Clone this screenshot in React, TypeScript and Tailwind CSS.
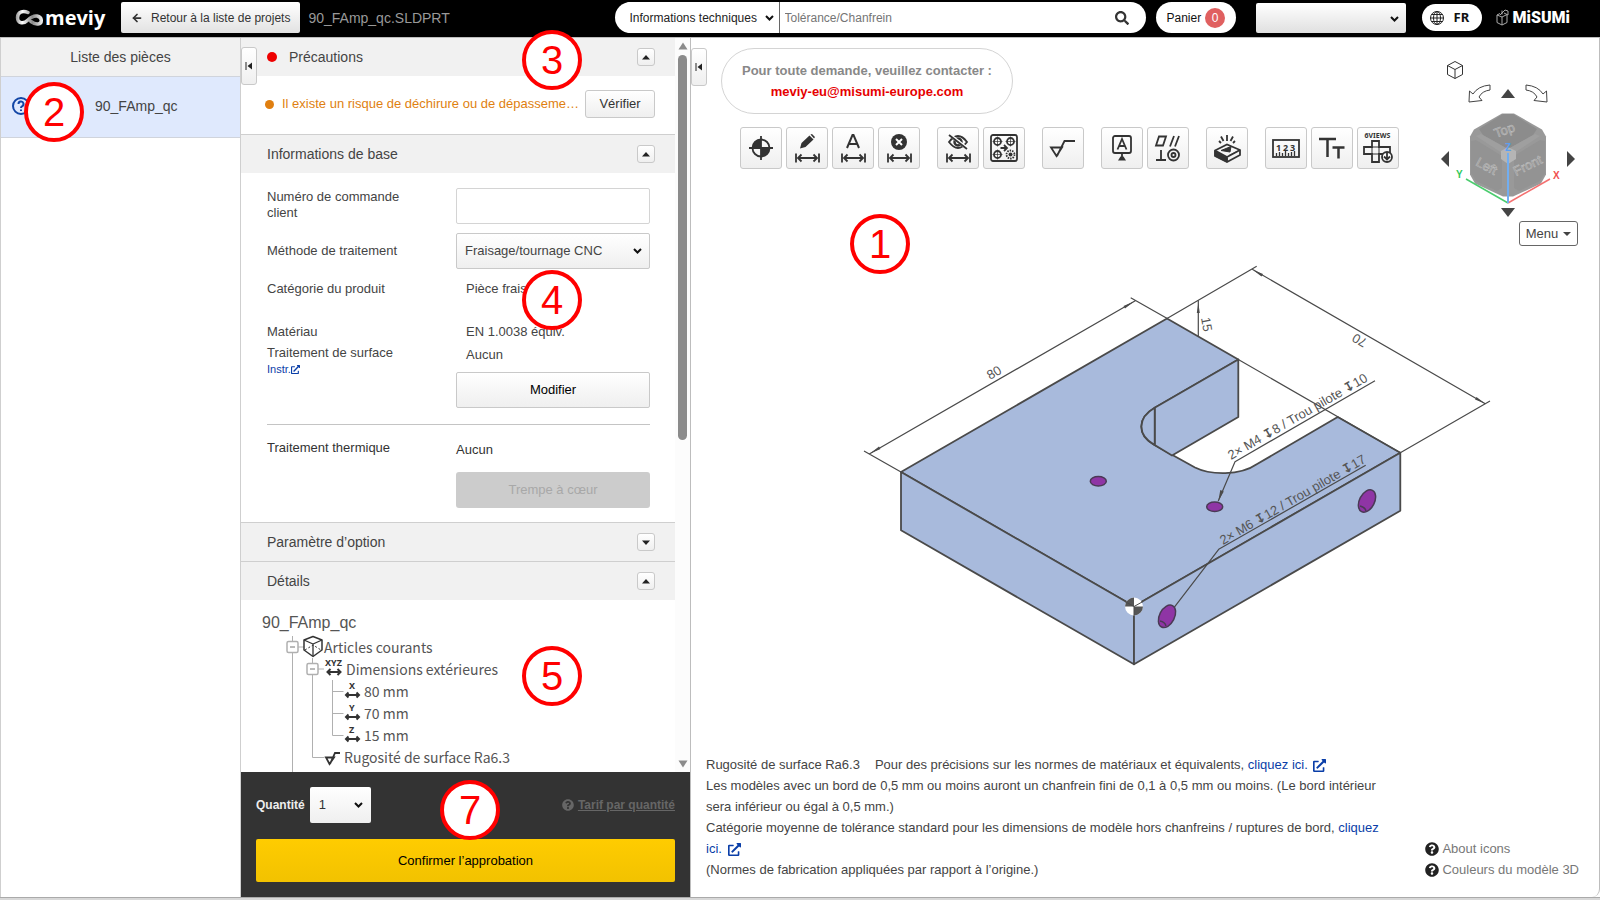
import React from "react";
import { clsx } from "clsx";
import { ArrowLeft } from "lucide-react";
import { FaSearch, FaQuestionCircle, FaExternalLinkAlt } from "react-icons/fa";

const GRADIENT = "bg-linear-to-b from-white to-[#efefef] border border-[#c9c9c9]";

function Marker({ n, className }: { n: number; className: string }) {
  return (
    <div
      className={clsx(
        "absolute z-20 flex h-[60px] w-[60px] items-center justify-center rounded-full border-4 border-[#ff0000] bg-white text-[40px] leading-none text-[#ff0000]",
        className
      )}
    >
      {n}
    </div>
  );
}

type SelectProps = { id?: string; label?: string; value: string; className: string; arrow: string };

function Select({ id, label, value, className, arrow }: SelectProps) {
  return (
    <div className="relative">
      <select id={id} aria-label={label} className={clsx("w-full appearance-none rounded-[2px]", className)}>
        <option>{value}</option>
      </select>
      <svg
        width="9"
        height="6"
        viewBox="0 0 9 6"
        fill="none"
        stroke="#111"
        strokeWidth="2"
        className={clsx("pointer-events-none absolute", arrow)}
      >
        <path d="M1 1l3.500 3.500L8 1" />
      </svg>
    </div>
  );
}

function MeviyLogo() {
  return (
    <div className="flex items-center">
      <svg width="30" height="18" viewBox="0 0 30 18" fill="none">
        <defs>
          <linearGradient id="loop" x1="0" y1="0" x2="29" y2="0" gradientUnits="userSpaceOnUse">
            <stop offset="0" stopColor="#888" />
            <stop offset="0.25" stopColor="#fff" />
            <stop offset="0.6" stopColor="#8a8a8a" />
            <stop offset="1" stopColor="#fff" />
          </linearGradient>
        </defs>
        <path
          d="M13 3.500C9 1.500 2.500 2 2.500 8.500C2.500 15 9 15 13 11C16 8 19 6.500 22 7C27.500 8 27.500 14.500 23 15C20 15.500 18 14 16 12.500"
          stroke="url(#loop)"
          strokeWidth="3.500"
          strokeLinecap="round"
        />
      </svg>
      <span className="font-['Open_Sans'] text-[20px] leading-6 font-bold text-white">meviy</span>
    </div>
  );
}

function MisumiLogo() {
  return (
    <div className="flex items-center gap-[3px]">
      <svg width="14" height="18" viewBox="0 0 14 18" fill="none" stroke="#aaa">
        <path d="M1 6l5 2v8l-5-2.500zM6 8l5-2.500v8L6 16M4 6l5-5 3 1v4M8 4l4 2M1 6l3-1.500M6 1.500v4" />
      </svg>
      <span className="font-['Roboto'] text-base leading-5 font-black text-white">MiSUMi</span>
    </div>
  );
}

function Globe() {
  return (
    <svg width="16" height="16" viewBox="0 0 16 16" fill="none" stroke="#222" strokeWidth="1">
      <circle cx="8" cy="8" r="6.500" />
      <ellipse cx="8" cy="8" rx="3.500" ry="6.500" />
      <path d="M8 1.500v13M1.500 8h13M2.500 4.500h11M2.500 11.500h11" />
    </svg>
  );
}

function Header() {
  return (
    <header className="flex h-[38px] shrink-0 items-center border-b border-[#bdbdbd] bg-black pr-[30px] pb-[2px] pl-[15px]">
      <div className="w-[106px]">
        <MeviyLogo />
      </div>
      <button className="flex h-[31px] items-center gap-2 rounded-[2px] bg-linear-to-b from-white to-[#e2e2e2] px-[10px] text-xs whitespace-nowrap text-[#333]">
        <ArrowLeft className="h-3 w-3" strokeWidth={3.5} />
        Retour à la liste de projets
      </button>
      <span className="ml-2 text-sm text-[#999]">90_FAmp_qc.SLDPRT</span>
      <div className="ml-auto flex items-center">
        <div className="flex h-[31px] w-[531px] items-center rounded-full bg-white pr-3 pl-3">
          <div className="w-[152px]">
            <Select
              label="Type de recherche"
              value="Informations techniques"
              className="h-[31px] bg-white pl-[3px] text-xs text-[#222]"
              arrow="top-[13px] right-[5px]"
            />
          </div>
          <input
            aria-label="Recherche"
            placeholder="Tolérance/Chanfrein"
            className="h-[31px] min-w-0 flex-1 border-l border-[#666] pl-[5px] text-xs placeholder:text-[#757575]"
          />
          <button aria-label="Rechercher" className="flex h-6 w-6 items-center justify-center text-[#333]">
            <FaSearch className="h-[14px] w-[14px]" />
          </button>
        </div>
        <button className="ml-[10px] flex h-[31px] w-[80px] items-center gap-1 rounded-full bg-white pl-[11px] text-xs text-[#111]">
          Panier
          <span className="flex h-5 w-5 items-center justify-center rounded-full bg-[#e06060] text-white">0</span>
        </button>
        <div className="ml-5 w-[150px]">
          <Select
            label="Compte"
            value=""
            className="h-[30px] bg-linear-to-b from-white to-[#e0e0e0] text-xs"
            arrow="top-[13px] right-[7px]"
          />
        </div>
        <button className="ml-4 flex h-[27px] w-[60px] items-center gap-2 rounded-full bg-white pl-[7px] font-['Noto_Sans'] text-[13px] font-bold text-[#111]">
          <Globe />
          <span className="pl-[1px]">FR</span>
        </button>
        <div className="ml-[14px]">
          <MisumiLogo />
        </div>
      </div>
    </header>
  );
}

function CollapseHandle({ label, className }: { label: string; className: string }) {
  return (
    <button
      aria-label={label}
      className={clsx("absolute z-10 flex h-[38px] w-4 items-center justify-center rounded-[3px]", GRADIENT, className)}
    >
      <svg width="8" height="8" viewBox="0 0 8 8" fill="#222">
        <path d="M0.500 0h1v8h-1zM7 0.500v7L2.500 4z" />
      </svg>
    </button>
  );
}

function PartList() {
  return (
    <aside className="w-[241px] shrink-0 border-x border-[#cfcfcf] bg-white">
      <h2 className="flex h-[38px] items-center justify-center bg-[#f1f1f1] text-sm text-[#444]">Liste des pièces</h2>
      <div className="flex h-[62px] items-center border-y border-[#d0d4dc] bg-[#dfe9fd] pb-[3px] pl-[11px]">
        <svg width="18" height="18" viewBox="0 0 18 18" fill="none" stroke="#1246a6" strokeWidth="2">
          <circle cx="9" cy="9" r="8" />
          <path d="M6.500 7a2.500 2.500 0 1 1 3.500 2.300q-1 .500-1 1.700M9 12.500v1.500" />
        </svg>
        <span className="pl-[65px] text-sm text-[#444]">90_FAmp_qc</span>
      </div>
    </aside>
  );
}

function Section({ title, open = true, dot = false }: { title: string; open?: boolean; dot?: boolean }) {
  return (
    <div
      className={clsx(
        "flex items-center bg-[#f1f1f1] pr-5 pl-[26px] text-sm text-[#444]",
        dot ? "h-[38px]" : "h-[39px] border-t border-[#cfcfcf]"
      )}
    >
      {dot && <span className="mr-3 h-[10px] w-[10px] rounded-full bg-[#ee0000]" />}
      <h2>{title}</h2>
      <button
        aria-label={title}
        className={clsx("ml-auto flex h-[18px] w-[18px] items-center justify-center rounded-[3px]", GRADIENT)}
      >
        <svg width="8" height="5" viewBox="0 0 8 5" fill="#222">
          <path d={open ? "M0 4.500h8L4 0z" : "M0 0.500h8L4 5z"} />
        </svg>
      </button>
    </div>
  );
}

function BasicInfo() {
  return (
    <div className="h-[349px] pt-[15px] pr-[25px] pl-[26px] text-[13px] leading-4 text-[#444]">
      <div className="flex justify-between">
        <label htmlFor="order" className="w-[150px] pt-[1px]">
          Numéro de commande client
        </label>
        <input id="order" className="h-[36px] w-[194px] rounded-[2px] border border-[#d4d4d4] px-2" />
      </div>
      <div className="mt-[9px] flex items-center justify-between">
        <label htmlFor="method">Méthode de traitement</label>
        <div className="w-[194px]">
          <Select
            id="method"
            value="Fraisage/tournage CNC"
            className={clsx("h-[36px] pl-2 text-[#444]", GRADIENT)}
            arrow="top-[15px] right-2"
          />
        </div>
      </div>
      <div className="mt-3 flex">
        <span className="w-[199px]">Catégorie du produit</span>
        <span>Pièce fraisée</span>
      </div>
      <div className="mt-[27px] flex">
        <span className="w-[199px]">Matériau</span>
        <span>EN 1.0038 équiv.</span>
      </div>
      <div className="mt-[5px] flex justify-between">
        <div>
          Traitement de surface
          <a href="#instr" className="flex items-center text-[11px] text-[#0a3ea8]">
            Instr.
            <FaExternalLinkAlt className="h-[9px] w-[9px]" />
          </a>
        </div>
        <div className="flex w-[194px] flex-col pt-[2px]">
          <span className="pl-[10px]">Aucun</span>
          <button className={clsx("mt-[9px] h-[36px] rounded-[2px] text-black", GRADIENT)}>Modifier</button>
        </div>
      </div>
      <hr className="mt-4 border-[#c4c4c4]" />
      <div className="mt-[15px] flex justify-between text-[#333]">
        <span>Traitement thermique</span>
        <div className="flex w-[194px] flex-col pt-[2px]">
          <span>Aucun</span>
          <button disabled className="mt-[14px] h-[36px] rounded-[3px] bg-[#cccccc] text-[#a8a8a8]">
            Trempe à cœur
          </button>
        </div>
      </div>
    </div>
  );
}

function ToggleBox({ x }: { x: number }) {
  return (
    <>
      <rect x={x} y="5.500" width="11" height="11" rx="1.500" fill="#fff" stroke="#b0b0b0" strokeWidth="1.500" />
      <path d={`M${x + 3} 11h5`} stroke="#777" />
    </>
  );
}

function TreeIcon({ kind }: { kind: string }) {
  if (kind === "part") {
    return (
      <svg width="62" height="22" viewBox="0 0 62 22" fill="none" className="overflow-visible">
        <path d="M30.500 0v22M36 11h6" stroke="#b0b0b0" />
        <ToggleBox x={25} />
        <g stroke="#333" strokeWidth="1.500" strokeLinejoin="round">
          <path d="M51 0.500l9 3.500v10l-9 6.500-9-6.500v-10z" />
          <path d="M42 4l9 4 9-4M51 8v12" strokeWidth="1.300" />
          <path d="M43 14l8-5 8 5" strokeDasharray="2 2" strokeWidth="1" />
        </g>
      </svg>
    );
  }
  if (kind === "xyz") {
    return (
      <svg width="84" height="22" viewBox="0 0 84 22" fill="none" className="overflow-visible">
        <path d="M30.500 0v22M50.500 0v22M56 11h6" stroke="#b0b0b0" />
        <ToggleBox x={45} />
        <text x="63" y="8" fontSize="9" fontWeight="bold" fill="#333" fontFamily="Noto Sans">
          XYZ
        </text>
        <path d="M66 14h11M68.500 11l-3 3 3 3M75.500 11l3 3-3 3" stroke="#333" strokeWidth="2" />
      </svg>
    );
  }
  if (kind === "rough") {
    return (
      <svg width="82" height="22" viewBox="0 0 82 22" fill="none" className="overflow-visible">
        <path d="M30.500 0v26M50.500 0v11.500h12" stroke="#b0b0b0" />
        <path d="M64 11.500h8l-4.500 6.500zM68 18l5-11h5" stroke="#333" strokeWidth="1.800" />
      </svg>
    );
  }
  return (
    <svg width="102" height="22" viewBox="0 0 102 22" fill="none" className="overflow-visible">
      <path
        d={kind === "Z" ? "M30.500 0v22M50.500 0v22M70.500 0v11.500h11" : "M30.500 0v22M50.500 0v22M70.500 0v22M70.500 11.500h11"}
        stroke="#b0b0b0"
      />
      <text x="87" y="9" fontSize="9" fontWeight="bold" fill="#333" fontFamily="Noto Sans">
        {kind}
      </text>
      <path d="M84 15h13M86.500 12.500l-2.500 2.500 2.500 2.500M94.500 12.500l2.500 2.500-2.500 2.500" stroke="#333" strokeWidth="2" />
    </svg>
  );
}

const TREE = [
  { kind: "part", text: "Articles courants" },
  { kind: "xyz", text: "Dimensions extérieures" },
  { kind: "X", text: "80 mm" },
  { kind: "Y", text: "70 mm" },
  { kind: "Z", text: "15 mm" },
  { kind: "rough", text: "Rugosité de surface Ra6.3" },
];

function Details() {
  return (
    <div className="pt-[9px] pl-[21px] text-[#555]">
      <div className="text-base leading-[27px]">90_FAmp_qc</div>
      <ul>
        {TREE.map((row) => (
          <li
            key={row.text}
            className="flex h-[22px] items-center font-['Noto_Sans_CJK_JP',sans-serif] text-sm whitespace-nowrap"
          >
            <TreeIcon kind={row.kind} />
            {row.text}
          </li>
        ))}
      </ul>
    </div>
  );
}

function Scrollbar() {
  return (
    <div className="flex w-[15px] flex-col items-center bg-[#fcfcfc] pt-1 pb-1">
      <svg width="10" height="8" viewBox="0 0 10 8" fill="#8b8b8b">
        <path d="M0.500 7.500L5 0.500l4.500 7z" />
      </svg>
      <div className="mt-[5px] mb-[5px] flex w-[9px] flex-1 flex-col">
        <div className="flex-[55] rounded-full bg-[#8b8b8b]" />
        <div className="flex-[45]" />
      </div>
      <svg width="10" height="8" viewBox="0 0 10 8" fill="#8b8b8b">
        <path d="M0.500 0.500h9L5 7.500z" />
      </svg>
    </div>
  );
}

function SettingsPanel() {
  return (
    <section className="relative flex w-[449px] shrink-0 flex-col">
      <CollapseHandle label="Réduire la liste" className="top-[9px] left-0" />
      <div className="flex min-h-0 flex-1">
        <div className="min-w-0 flex-1 overflow-hidden">
          <Section title="Précautions" dot />
          <div className="flex h-[58px] items-center pr-5 pb-[2px] pl-6 text-[13px] text-[#e07f10]">
            <span className="mr-2 h-[9px] w-[9px] shrink-0 rounded-full bg-[#e07f10]" />
            <span className="min-w-0 flex-1 whitespace-nowrap">Il existe un risque de déchirure ou de dépasseme…</span>
            <button className={clsx("h-7 w-[70px] rounded-[3px] text-[#333]", GRADIENT)}>Vérifier</button>
          </div>
          <Section title="Informations de base" />
          <BasicInfo />
          <Section title="Paramètre d’option" open={false} />
          <Section title="Détails" />
          <Details />
        </div>
        <Scrollbar />
      </div>
      <footer className="h-[125px] shrink-0 bg-[#333] px-[15px] pt-[15px] text-[13px]">
        <div className="flex items-center">
          <label htmlFor="qty" className="text-xs font-bold text-[#eee]">
            Quantité
          </label>
          <div className="ml-[5px] w-[61px]">
            <Select
              id="qty"
              value="1"
              className="h-[36px] bg-linear-to-b from-white to-[#efefef] pl-[9px] text-[#333]"
              arrow="top-[15px] right-2"
            />
          </div>
          <a href="#tarif" className="ml-auto flex items-center gap-1 text-xs font-bold text-[#666]">
            <FaQuestionCircle className="h-3 w-3" />
            <span className="underline">Tarif par quantité</span>
          </a>
        </div>
        <button className="mt-4 h-[43px] w-full rounded-[2px] bg-linear-to-b from-[#ffcc00] to-[#f2c200] text-black">
          Confirmer l’approbation
        </button>
      </footer>
    </section>
  );
}

const Span = () => <path d="M9 25.500v9M32 25.500v9M11 30h19M14.500 26.500L11 30l3.500 3.500M26.500 26.500L30 30l-3.500 3.500" strokeWidth="1.800" />;

const TOOLS: { label: string; art: React.ReactNode }[][] = [
  [
    {
      label: "Origine",
      art: (
        <>
          <circle cx="20" cy="20" r="8.500" />
          <path d="M20 20v-8.500a8.500 8.500 0 0 0-8.500 8.500zM20 20v8.500a8.500 8.500 0 0 0 8.500-8.500z" fill="#333" stroke="none" />
          <path d="M20 8v24M8 20h24" />
        </>
      ),
    },
    {
      label: "Modifier la cote",
      art: (
        <>
          <Span />
          <path d="M13 20.500l1.500-5.500 8-7.500 4 4-8 7.500zM23.500 6.500l1.500-.500 3 3-1 1.500z" fill="#333" stroke="none" />
        </>
      ),
    },
    {
      label: "Texte de cote",
      art: (
        <>
          <Span />
          <path d="M14 20l5.500-13h1l5.500 13M16 16h8" strokeWidth="2" />
        </>
      ),
    },
    {
      label: "Supprimer la cote",
      art: (
        <>
          <Span />
          <circle cx="20" cy="14" r="8" fill="#333" stroke="none" />
          <path d="M17 11l6 6M23 11l-6 6" stroke="#fff" strokeWidth="2" />
        </>
      ),
    },
  ],
  [
    {
      label: "Masquer la cote",
      art: (
        <>
          <Span />
          <path d="M11 14q9-12 18 0q-9 12-18 0z" />
          <circle cx="20" cy="14" r="3.500" strokeWidth="2.500" />
          <path d="M12 7l18 14" stroke="#fff" strokeWidth="3" />
          <path d="M11 7l18 14" />
        </>
      ),
    },
    {
      label: "Grouper les trous",
      art: (
        <>
          <rect x="7" y="7" width="26" height="26" rx="2" />
          <circle cx="13.500" cy="13.500" r="3.500" />
          <circle cx="26.500" cy="13.500" r="3.500" />
          <circle cx="13.500" cy="26.500" r="3.500" />
          <circle cx="26.500" cy="26.500" r="4" strokeDasharray="1.500 1" />
          <circle cx="26.500" cy="26.500" r="2" fill="#333" stroke="none" />
          <path d="M13.500 8.500v10M8.500 13.500h10M26.500 8.500v10M21.500 13.500h10M13.500 21.500v10M8.500 26.500h10" strokeWidth="0.700" />
          <path d="M16.500 20h6M20 17l3 3-3 3" />
        </>
      ),
    },
  ],
  [{ label: "Rugosité", art: <path d="M8 19.500h11l-5.500 8.500zM14 28l7.500-15H32" /> }],
  [
    {
      label: "Référence",
      art: (
        <>
          <rect x="11" y="8" width="18" height="17" rx="2" />
          <path d="M15.500 21.500l4.500-10.500 4.500 10.500M17 18h6M20 25v5" />
          <path d="M16 32.500l2.500-4h3l2.500 4z" fill="#333" stroke="none" />
        </>
      ),
    },
    {
      label: "Tolérance géométrique",
      art: (
        <>
          <path d="M8 17.500l3-9h7l-3 9zM22 18.500l4-10.500M27 18.500l4-10.500M13 22v10M8 32h10" />
          <circle cx="25.500" cy="27" r="5.500" />
          <circle cx="25.500" cy="27" r="2" />
        </>
      ),
    },
  ],
  [
    {
      label: "Gravure",
      art: (
        <>
          <path d="M8 22.500l12-6 13 5.500v5L20 34 8 28z" />
          <path d="M8 22.500l12 6.500 13-7M20 29v4.500" />
          <path d="M14 22.500l10-4-1 5.500zM8 23l12 6.500V34L8 28z" fill="#333" strokeWidth="1" />
          <path d="M22 27.500l9-4.500" strokeWidth="1" />
          <path d="M20 7v6M14 8.500l2.500 4.500M26 8.500L23.500 13M12 13l2 2M28 13l-2 2" />
        </>
      ),
    },
  ],
  [
    {
      label: "Mesurer",
      art: (
        <>
          <rect x="7" y="12" width="26" height="17" />
          <path d="M10.500 28v-3M13.500 28v-4M16.500 28v-3M19.500 28v-5M22.500 28v-3M25.500 28v-4M28.500 28v-5" strokeWidth="1.300" />
          <g fontSize="9" fontWeight="bold" fill="#333" stroke="none" fontFamily="Noto Sans">
            <text x="10" y="23">1</text>
            <text x="17" y="23">2</text>
            <text x="24" y="23">3</text>
          </g>
        </>
      ),
    },
    { label: "Taille du texte", art: <path d="M7 11h17M15.500 11v18M20.500 19.500h12M26.500 19.500v11" strokeWidth="2.500" /> },
    {
      label: "Six vues",
      art: (
        <>
          <text x="6.500" y="10" fontSize="7" fontWeight="bold" fill="#333" stroke="none" fontFamily="Noto Sans">
            6VIEWS
          </text>
          <path d="M14 13h7v6h11v7H21v8h-7v-8H6v-7h8z" />
          <path d="M14 19v7h7v-7z" strokeWidth="1" />
          <circle cx="29" cy="29" r="5" fill="#fff" />
          <path d="M29 24v7M26 28.500l3 3 3-3" />
        </>
      ),
    },
  ],
];

function Toolbar() {
  return (
    <div className="flex gap-[17px]">
      {TOOLS.map((group, i) => (
        <div key={i} className="flex gap-1">
          {group.map((tool) => (
            <button
              key={tool.label}
              aria-label={tool.label}
              className={clsx("flex h-[42px] w-[42px] items-center justify-center rounded-[3px]", GRADIENT)}
            >
              <svg width="40" height="40" viewBox="0 0 40 40" fill="none" stroke="#333" strokeWidth="1.800">
                {tool.art}
              </svg>
            </button>
          ))}
        </div>
      ))}
    </div>
  );
}

function Triangle({ label, d, w, h }: { label: string; d: string; w: number; h: number }) {
  return (
    <button aria-label={label}>
      <svg width={w} height={h} viewBox={`0 0 ${w} ${h}`} fill="#444">
        <path d={d} />
      </svg>
    </button>
  );
}

function ViewCube() {
  return (
    <div className="absolute top-[23px] right-[21px] flex w-[137px] flex-col">
      <button aria-label="Vue isométrique" className="ml-[5px] h-[18px] w-[18px]">
        <svg width="18" height="18" viewBox="0 0 18 18" fill="none" stroke="#333" strokeWidth="1">
          <path d="M9 0.500l7.500 4v9L9 17.500l-7.500-4v-9zM1.500 4.500L9 8.500l7.500-4M9 8.500v9" />
        </svg>
      </button>
      <div className="mt-[5px] flex w-[133px] items-center justify-center gap-[10px]">
        <button aria-label="Tourner à gauche">
          <svg width="23" height="19" viewBox="0 0 23 19" fill="#fff" stroke="#444" strokeWidth="1">
            <path d="M22 1v5q-8 1-11 7l3 3.500-13 1.500L1.500 7l3.500 3Q10 2 22 1z" />
          </svg>
        </button>
        <Triangle label="Haut" d="M0 9h14L7 0z" w={14} h={9} />
        <button aria-label="Tourner à droite">
          <svg width="23" height="19" viewBox="0 0 23 19" fill="#fff" stroke="#444" strokeWidth="1">
            <path d="M1 1v5q8 1 11 7l-3 3.500 13 1.500-.500-11-3.500 3Q13 2 1 1z" />
          </svg>
        </button>
      </div>
      <div className="mt-2 flex w-[134px] items-center justify-between">
        <Triangle label="Gauche" d="M8 0v16L0 8z" w={8} h={16} />
        <svg width="108" height="95" viewBox="1454 111 108 95">
          <path d="M1502 113.500h12l28 16 4 7v38l-5 9-28 13h-10l-28-13-5-9v-38l4-7z" fill="#999" />
          <path d="M1503 114h10l24 15-4 6-25 14-25-14-4-6z" fill="#8c8c8c" />
          <path d="M1471 141l5-1 26 16v32l-5 3-21-10-5-8zM1545 141l-5-1-26 16v32l5 3 21-10 5-8z" fill="#939393" />
          <path d="M1476 136l5-2 25 14-4 5zM1540 136l-5-2-25 14 4 5z" fill="#9f9f9f" />
          <path d="M1501 151l7-4 8 4v8l-8 5-7-5z" fill="#b5b5b5" />
          <g fontFamily="Liberation Sans" fontSize="13" fill="#8f8f8f" stroke="#bbb" strokeWidth="0.600">
            <text x="1496" y="138" transform="rotate(-20 1496 138)">Top</text>
            <text x="1475" y="165" transform="rotate(28 1475 165)">Left</text>
            <text x="1516" y="176" transform="rotate(-26 1516 176)">Front</text>
          </g>
          <path d="M1508 203l-42-24" stroke="#4bcc6e" strokeWidth="1.500" />
          <path d="M1508 203l42-24" stroke="#f47070" strokeWidth="1.500" />
          <path d="M1508 203v-50" stroke="#72aef0" strokeWidth="2" />
          <g fontFamily="Liberation Sans" fontSize="10" fontWeight="bold">
            <text x="1456" y="178" fill="#2fc95a">Y</text>
            <text x="1553" y="179" fill="#f05050">X</text>
            <text x="1505" y="151" fill="#5a9ff0">Z</text>
          </g>
        </svg>
        <Triangle label="Droite" d="M0 0v16l8-8z" w={8} h={16} />
      </div>
      <div className="mt-[2px] flex h-[9px] w-[133px] justify-center">
        <Triangle label="Bas" d="M0 0h14L7 9z" w={14} h={9} />
      </div>
      <button className="mt-1 flex h-[25px] w-[59px] items-center justify-center gap-[5px] self-end rounded-[3px] border border-[#666] bg-white text-[13px] text-[#444]">
        Menu
        <svg width="8" height="4" viewBox="0 0 8 4" fill="#444">
          <path d="M0 0h8L4 4z" />
        </svg>
      </button>
    </div>
  );
}

// Isometric view of the part with its dimensions and thread notes
function ModelView() {
  return (
    <svg viewBox="691 170 908 581" className="min-h-0 w-full flex-1" fill="none" strokeLinejoin="round">
      <g fill="#a8badc" stroke="#4a4a4a" strokeWidth="1.800">
        <path d="M901 471L1167 317.500L1238.300 358.500L1154.700 406.700C1137 417 1137 434 1153.500 443.500L1195 466.500C1210 474 1240 475 1256.700 463.300L1337.700 416L1400.300 451.700L1134 605.300z" />
        <path d="M901 471v58.300l233 134v-58z" />
        <path d="M1134 605.300v58l266.300-153.600v-58z" />
        <path d="M1154.700 406.700l83.600-48.200V416l-66.300 38.500-17.300-10.500z" />
        <path d="M1154.700 406.700C1137 417 1137 434 1154.700 444z" />
      </g>
      <g stroke="#4a4a4a" strokeWidth="1.200">
        <path d="M869.300 453L1135.300 299.700M864 450l37 21M1130.700 296.700l37 21" />
        <path d="M1167 317.500L1256.700 265.300M1252.300 268.300L1485.700 403M1400.300 451.700L1490 400" />
        <path d="M1238.300 358.500l162 93.200M1198.300 299.300V335" />
        <path d="M1375 379.700L1235 460.700L1218.300 500M1365.700 464.300L1218.700 548.300L1174 606.700" />
      </g>
      <path d="M1198.300 302l1.500 10h-3zM1134 300.500l-9 7-1.500-2.500zM870 452.500l9-7 1.500 2.500zM1253 269l10 4-1.500 2.500zM1485 402.500l-10-4 1.500-2.500zM1218.300 500l2-11 3.500 1.500z" fill="#4a4a4a" />
      <g fill="#8f35a5" stroke="#4a3a55" strokeWidth="1.500">
        <ellipse cx="1098.300" cy="480.300" rx="8" ry="4.700" />
        <ellipse cx="1214.700" cy="505.700" rx="8" ry="4.700" />
        <ellipse cx="1167" cy="615.300" rx="7.500" ry="12" transform="rotate(27 1167 615.300)" />
        <ellipse cx="1367" cy="500" rx="7.500" ry="12" transform="rotate(27 1367 500)" />
        <path d="M1160 620q5 1 6 5M1360 505q5 1 6 5" />
      </g>
      <circle cx="1134" cy="605.500" r="9" fill="#fff" />
      <path d="M1134 605.500v-9a9 9 0 0 0-9 9zM1134 605.500v9a9 9 0 0 0 9-9z" fill="#555" />
      <path d="M1125 600.500l9 5 9-5M1134 605.500v9" stroke="#4a4a4a" />
      <g fill="#555" fontFamily="Liberation Sans, sans-serif" fontSize="13">
        <text x="990" y="379" transform="rotate(-30 990 379)">80</text>
        <text x="1201" y="317" transform="rotate(80 1201 317)">15</text>
        <text x="1368" y="339" transform="rotate(210 1368 339)">70</text>
        <text x="1231" y="459" transform="rotate(-30 1231 459)">
          2× M4 <tspan fontFamily="DejaVu Sans" fontWeight="bold">↧</tspan>8 / Trou pilote <tspan fontFamily="DejaVu Sans" fontWeight="bold">↧</tspan>10
        </text>
        <text x="1223" y="544" transform="rotate(-30 1223 544)">
          2× M6 <tspan fontFamily="DejaVu Sans" fontWeight="bold">↧</tspan>12 / Trou pilote <tspan fontFamily="DejaVu Sans" fontWeight="bold">↧</tspan>17
        </text>
      </g>
    </svg>
  );
}

function Notes() {
  const link = "text-[#0a3ea8]";
  return (
    <div className="flex items-end justify-between pr-5 pb-[17px] pl-[15px] text-[13px] leading-[21px] text-[#444]">
      <div className="w-[680px]">
        <p>
          <span className="mr-[15px]">Rugosité de surface Ra6.3</span>
          Pour des précisions sur les normes de matériaux et équivalents,{" "}
          <a href="#materiaux" className={link}>
            cliquez ici. <FaExternalLinkAlt className="ml-[2px] inline h-[13px] w-[13px]" />
          </a>
        </p>
        <p>
          Les modèles avec un bord de 0,5 mm ou moins auront un chanfrein fini de 0,1 à 0,5 mm ou moins. (Le bord intérieur
          sera inférieur ou égal à 0,5 mm.)
        </p>
        <p>
          Catégorie moyenne de tolérance standard pour les dimensions de modèle hors chanfreins / ruptures de bord,{" "}
          <a href="#tolerance" className={link}>
            cliquez ici. <FaExternalLinkAlt className="ml-[2px] inline h-[13px] w-[13px]" />
          </a>
        </p>
        <p>(Normes de fabrication appliquées par rapport à l’origine.)</p>
      </div>
      <div className="flex flex-col text-[#777]">
        <a href="#icons" className="flex items-center gap-[3px]">
          <FaQuestionCircle className="h-[14px] w-[14px] text-[#222]" />
          About icons
        </a>
        <a href="#couleurs" className="flex items-center gap-[3px]">
          <FaQuestionCircle className="h-[14px] w-[14px] text-[#222]" />
          Couleurs du modèle 3D
        </a>
      </div>
    </div>
  );
}

function Viewer() {
  return (
    <main className="relative flex min-w-0 flex-1 flex-col rounded-br-lg border-x border-[#bdbdbd] bg-white">
      <CollapseHandle label="Réduire le panneau" className="top-[10px] left-0" />
      <div className="flex flex-col items-start pt-[10px] pl-[30px]">
        <div className="rounded-full border border-[#d4d4d4] px-5 py-[11px] text-center text-[13px] leading-[21px] font-bold text-[#888]">
          Pour toute demande, veuillez contacter :
          <br />
          <a href="mailto:meviy-eu@misumi-europe.com" className="text-[#e60000]">
            meviy-eu@misumi-europe.com
          </a>
        </div>
      </div>
      <div className="pt-[13px] pl-[49px]">
        <Toolbar />
      </div>
      <ModelView />
      <Notes />
      <ViewCube />
    </main>
  );
}

export default function App() {
  return (
    <div className="relative flex h-screen min-h-[720px] flex-col overflow-hidden bg-[#d8d8d8] pb-[2px] font-['Liberation_Sans',Arial,sans-serif] text-[13px]">
      <Header />
      <div className="flex min-h-0 flex-1 border-b border-[#aaa] bg-white">
        <PartList />
        <SettingsPanel />
        <Viewer />
      </div>
      <Marker n={1} className="top-[214px] left-[850px]" />
      <Marker n={2} className="top-[82px] left-[24px]" />
      <Marker n={3} className="top-[30px] left-[522px]" />
      <Marker n={4} className="top-[270px] left-[522px]" />
      <Marker n={5} className="top-[646px] left-[522px]" />
      <Marker n={7} className="top-[780px] left-[440px]" />
    </div>
  );
}
